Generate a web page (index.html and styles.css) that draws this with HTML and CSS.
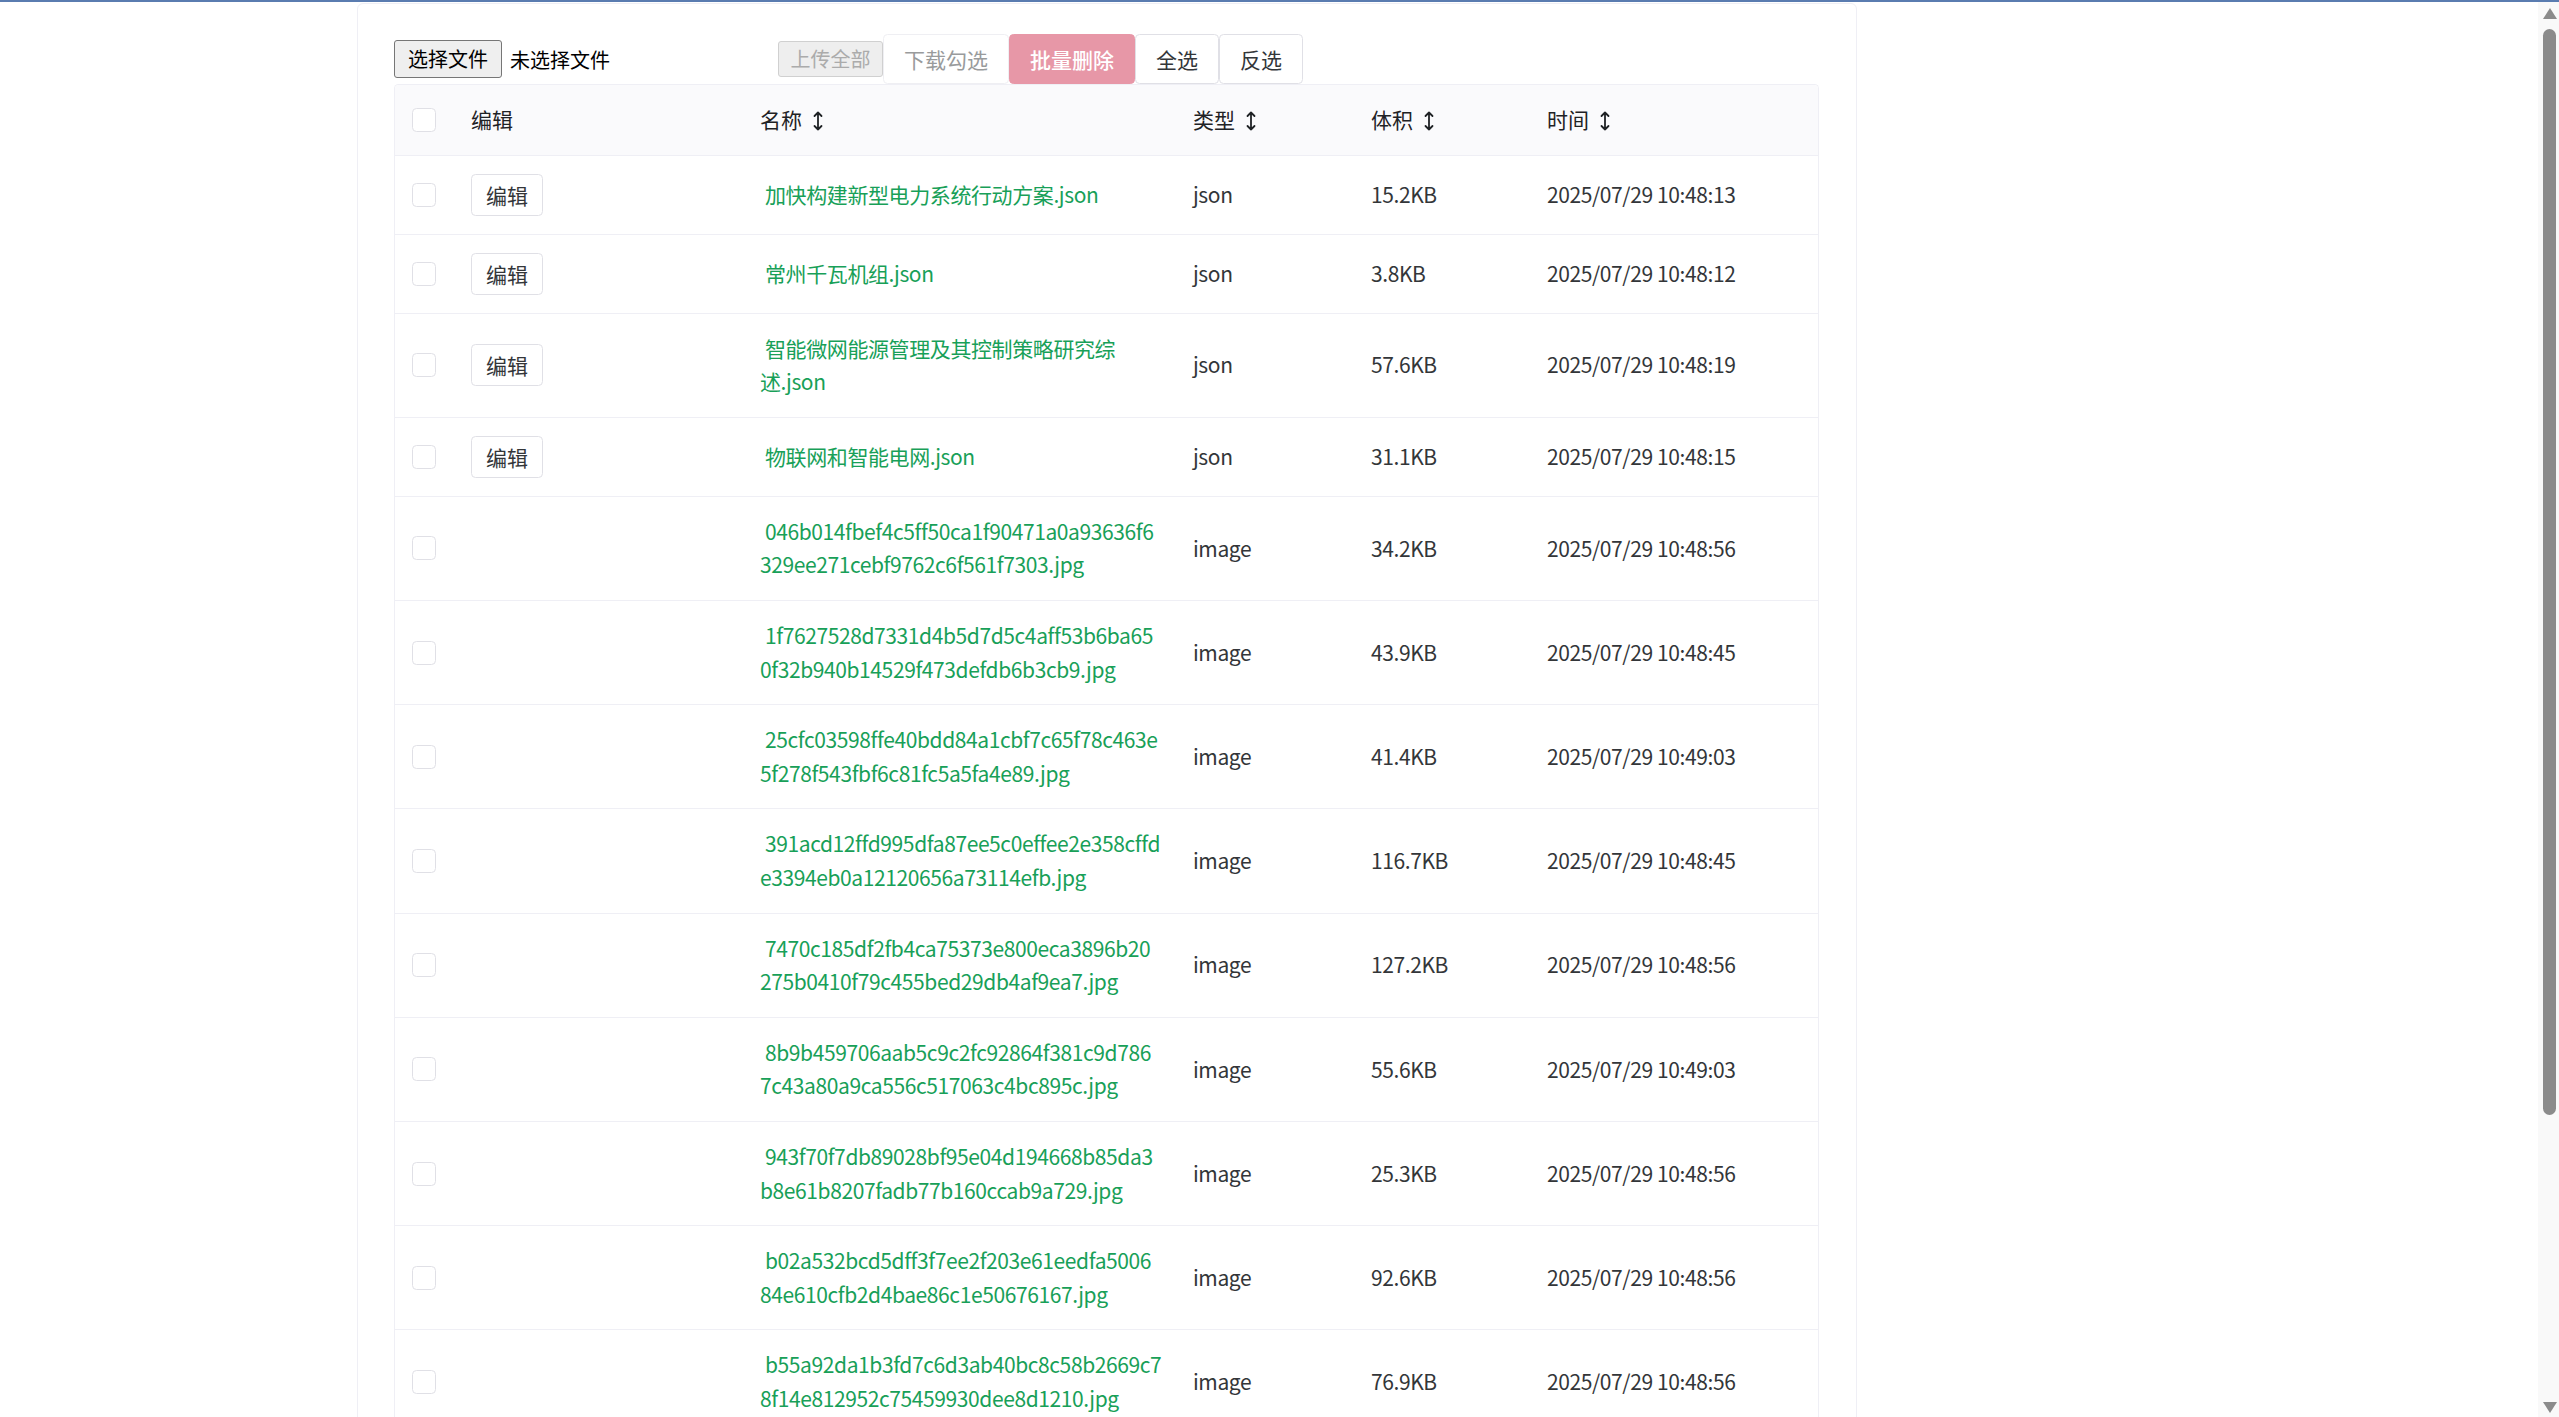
FILE: index.html
```html
<!DOCTYPE html>
<html lang="zh-CN">
<head>
<meta charset="utf-8">
<title>文件管理</title>
<link rel="stylesheet" href="styles.css">
</head>
<body>
<div class="topbar"></div>
<main class="panel">
  <div class="toolbar">
    <div class="file-picker">
      <button class="file-btn" type="button">选择文件</button>
      <span class="file-status">未选择文件</span>
    </div>
    <button class="native-btn" type="button" disabled>上传全部</button>
    <div class="btn-group">
      <button class="n-btn is-disabled" type="button">下载勾选</button>
      <button class="n-btn n-btn-error is-disabled" type="button">批量删除</button>
      <button class="n-btn" type="button">全选</button>
      <button class="n-btn" type="button">反选</button>
    </div>
  </div>

  <table class="file-table">
    <colgroup>
      <col class="c-check"><col class="c-edit"><col class="c-name"><col class="c-type"><col class="c-size"><col class="c-time">
    </colgroup>
    <thead>
      <tr>
        <th class="cell-check"><span class="checkbox"></span></th>
        <th>编辑</th>
        <th>名称<svg class="sort" viewBox="0 0 10 20" width="10" height="20"><path d="M5 1.5V18.5M1.5 5L5 1.5L8.5 5M1.5 15L5 18.5L8.5 15"/></svg></th>
        <th>类型<svg class="sort" viewBox="0 0 10 20" width="10" height="20"><path d="M5 1.5V18.5M1.5 5L5 1.5L8.5 5M1.5 15L5 18.5L8.5 15"/></svg></th>
        <th>体积<svg class="sort" viewBox="0 0 10 20" width="10" height="20"><path d="M5 1.5V18.5M1.5 5L5 1.5L8.5 5M1.5 15L5 18.5L8.5 15"/></svg></th>
        <th>时间<svg class="sort" viewBox="0 0 10 20" width="10" height="20"><path d="M5 1.5V18.5M1.5 5L5 1.5L8.5 5M1.5 15L5 18.5L8.5 15"/></svg></th>
      </tr>
    </thead>
    <tbody>
      <tr>
        <td class="cell-check"><span class="checkbox"></span></td>
        <td><button class="edit-btn" type="button">编辑</button></td>
        <td class="name"><a href="#">加快构建新型电力系统行动方案.json</a></td>
        <td>json</td><td>15.2KB</td><td>2025/07/29 10:48:13</td>
      </tr>
      <tr>
        <td class="cell-check"><span class="checkbox"></span></td>
        <td><button class="edit-btn" type="button">编辑</button></td>
        <td class="name"><a href="#">常州千瓦机组.json</a></td>
        <td>json</td><td>3.8KB</td><td>2025/07/29 10:48:12</td>
      </tr>
      <tr>
        <td class="cell-check"><span class="checkbox"></span></td>
        <td><button class="edit-btn" type="button">编辑</button></td>
        <td class="name"><a href="#">智能微网能源管理及其控制策略研究综述.json</a></td>
        <td>json</td><td>57.6KB</td><td>2025/07/29 10:48:19</td>
      </tr>
      <tr>
        <td class="cell-check"><span class="checkbox"></span></td>
        <td><button class="edit-btn" type="button">编辑</button></td>
        <td class="name"><a href="#">物联网和智能电网.json</a></td>
        <td>json</td><td>31.1KB</td><td>2025/07/29 10:48:15</td>
      </tr>
      <tr>
        <td class="cell-check"><span class="checkbox"></span></td>
        <td></td>
        <td class="name"><a href="#">046b014fbef4c5ff50ca1f90471a0a93636f6<wbr>329ee271cebf9762c6f561f7303.jpg</a></td>
        <td>image</td><td>34.2KB</td><td>2025/07/29 10:48:56</td>
      </tr>
      <tr>
        <td class="cell-check"><span class="checkbox"></span></td>
        <td></td>
        <td class="name"><a href="#">1f7627528d7331d4b5d7d5c4aff53b6ba65<wbr>0f32b940b14529f473defdb6b3cb9.jpg</a></td>
        <td>image</td><td>43.9KB</td><td>2025/07/29 10:48:45</td>
      </tr>
      <tr>
        <td class="cell-check"><span class="checkbox"></span></td>
        <td></td>
        <td class="name"><a href="#">25cfc03598ffe40bdd84a1cbf7c65f78c463e<wbr>5f278f543fbf6c81fc5a5fa4e89.jpg</a></td>
        <td>image</td><td>41.4KB</td><td>2025/07/29 10:49:03</td>
      </tr>
      <tr>
        <td class="cell-check"><span class="checkbox"></span></td>
        <td></td>
        <td class="name"><a href="#">391acd12ffd995dfa87ee5c0effee2e358cffd<wbr>e3394eb0a12120656a73114efb.jpg</a></td>
        <td>image</td><td>116.7KB</td><td>2025/07/29 10:48:45</td>
      </tr>
      <tr>
        <td class="cell-check"><span class="checkbox"></span></td>
        <td></td>
        <td class="name"><a href="#">7470c185df2fb4ca75373e800eca3896b20<wbr>275b0410f79c455bed29db4af9ea7.jpg</a></td>
        <td>image</td><td>127.2KB</td><td>2025/07/29 10:48:56</td>
      </tr>
      <tr>
        <td class="cell-check"><span class="checkbox"></span></td>
        <td></td>
        <td class="name"><a href="#">8b9b459706aab5c9c2fc92864f381c9d786<wbr>7c43a80a9ca556c517063c4bc895c.jpg</a></td>
        <td>image</td><td>55.6KB</td><td>2025/07/29 10:49:03</td>
      </tr>
      <tr>
        <td class="cell-check"><span class="checkbox"></span></td>
        <td></td>
        <td class="name"><a href="#">943f70f7db89028bf95e04d194668b85da3<wbr>b8e61b8207fadb77b160ccab9a729.jpg</a></td>
        <td>image</td><td>25.3KB</td><td>2025/07/29 10:48:56</td>
      </tr>
      <tr>
        <td class="cell-check"><span class="checkbox"></span></td>
        <td></td>
        <td class="name"><a href="#">b02a532bcd5dff3f7ee2f203e61eedfa5006<wbr>84e610cfb2d4bae86c1e50676167.jpg</a></td>
        <td>image</td><td>92.6KB</td><td>2025/07/29 10:48:56</td>
      </tr>
      <tr>
        <td class="cell-check"><span class="checkbox"></span></td>
        <td></td>
        <td class="name"><a href="#">b55a92da1b3fd7c6d3ab40bc8c58b2669c7<wbr>8f14e812952c75459930dee8d1210.jpg</a></td>
        <td>image</td><td>76.9KB</td><td>2025/07/29 10:48:56</td>
      </tr>
    </tbody>
  </table>
</main>

<div class="scrollbar" aria-hidden="true">
  <span class="sb-arrow sb-up"></span>
  <span class="sb-thumb"></span>
  <span class="sb-arrow sb-down"></span>
</div>
</body>
</html>
```

FILE: styles.css
```css
html, body {
  margin: 0;
  padding: 0;
}

::-webkit-scrollbar {
  display: none;
}

body {
  font-family: "Noto Sans CJK SC", "Noto Sans", sans-serif;
  color: #333639;
  background: #ffffff;
}

.topbar {
  position: relative;
  z-index: 2;
  height: 2px;
  background: #5a7cb0;
}

/* window scrollbar (drawn over the page edge) */
.scrollbar {
  position: fixed;
  top: 0;
  right: 0;
  bottom: 0;
  width: 21px;
  box-sizing: border-box;
  padding: 0 0 0 2px;
  display: flex;
  flex-direction: column;
  align-items: center;
  background: #f9f9f9;
}

.sb-arrow {
  width: 0;
  height: 0;
  border-left: 7.5px solid transparent;
  border-right: 7.5px solid transparent;
}

.sb-up {
  margin-top: 8px;
  border-bottom: 11px solid #8b8b8b;
}

.sb-down {
  margin-top: auto;
  margin-bottom: 4px;
  border-top: 11px solid #8b8b8b;
}

.sb-thumb {
  margin-top: 10px;
  width: 13px;
  height: 1086px;
  border-radius: 7px;
  background: #8b8b8b;
}

.panel {
  box-sizing: border-box;
  width: 1500px;
  margin: 1px 0 0 357px;
  padding: 30px 36px 346px;
  border: 1px solid #efeff5;
  border-radius: 6px 6px 0 0;
}

/* toolbar */
.toolbar {
  display: flex;
  align-items: center;
  height: 50px;
}

.file-picker {
  width: 384px;
  display: flex;
  align-items: center;
  gap: 8px;
}

.file-btn {
  box-sizing: border-box;
  height: 38px;
  padding: 0 13px;
  font-family: "Noto Sans CJK SC", sans-serif;
  font-size: 20px;
  line-height: 36px;
  color: #000;
  background: #efefef;
  border: 1px solid #767676;
  border-radius: 3px;
}

.file-status {
  font-size: 20px;
  color: #000;
}

.native-btn {
  box-sizing: border-box;
  height: 36px;
  width: 105px;
  padding: 0;
  font-family: "Noto Sans CJK SC", sans-serif;
  font-size: 20px;
  line-height: 34px;
  color: #ababab;
  background: #eeeeee;
  border: 1px solid #d0d0d0;
  border-radius: 3px;
}

.btn-group {
  display: flex;
}

.n-btn {
  box-sizing: border-box;
  height: 50px;
  padding: 0 20px;
  font-family: "Noto Sans CJK SC", sans-serif;
  font-size: 21px;
  line-height: 48px;
  color: #333639;
  background: #fff;
  border: 1px solid #e0e0e6;
  border-radius: 4.5px;
}

.n-btn.is-disabled {
  color: #999b9c;
  border-color: #efeff3;
}

.n-btn-error.is-disabled {
  color: #fff;
  font-weight: 500;
  background: #e797a7;
  border-color: #e797a7;
}

/* table */
.file-table {
  width: 1425px;
  table-layout: fixed;
  border-collapse: separate;
  border-spacing: 0;
  border: 1px solid #efeff5;
  border-bottom: 0;
  border-radius: 4.5px 4.5px 0 0;
  font-size: 21px;
  line-height: 1.6;
}

.c-check { width: 58px; }
.c-edit { width: 289px; }
.c-name { width: 433px; }
.c-type { width: 178px; }
.c-size { width: 176px; }

.file-table th,
.file-table td {
  padding: 18px;
  text-align: left;
  vertical-align: middle;
  border-bottom: 1px solid #efeff5;
}

.file-table td {
  letter-spacing: -0.4px;
}

.file-table th {
  background: #fafafc;
  font-weight: 400;
  color: #1f2225;
}

.file-table thead th:first-child {
  border-top-left-radius: 4px;
}
.file-table thead th:last-child {
  border-top-right-radius: 4px;
}

.file-table .cell-check {
  padding-left: 17px;
  padding-right: 17px;
}

.checkbox {
  display: block;
  box-sizing: border-box;
  width: 24px;
  height: 24px;
  background: #fff;
  border: 1px solid #e0e0e6;
  border-radius: 4.5px;
}

.sort {
  display: inline-block;
  margin-left: 11px;
  vertical-align: -3px;
  fill: none;
  stroke: #1f2225;
  stroke-width: 1.8;
  stroke-linecap: round;
  stroke-linejoin: round;
}

.edit-btn {
  display: block;
  box-sizing: border-box;
  height: 42px;
  padding: 0 14px;
  font-family: "Noto Sans CJK SC", sans-serif;
  font-size: 21px;
  line-height: 40px;
  letter-spacing: 0;
  color: #333639;
  background: #fff;
  border: 1px solid #e0e0e6;
  border-radius: 4.5px;
}

.name {
  text-indent: 5px;
}

.name a {
  color: #18a058;
  text-decoration: none;
}
```
